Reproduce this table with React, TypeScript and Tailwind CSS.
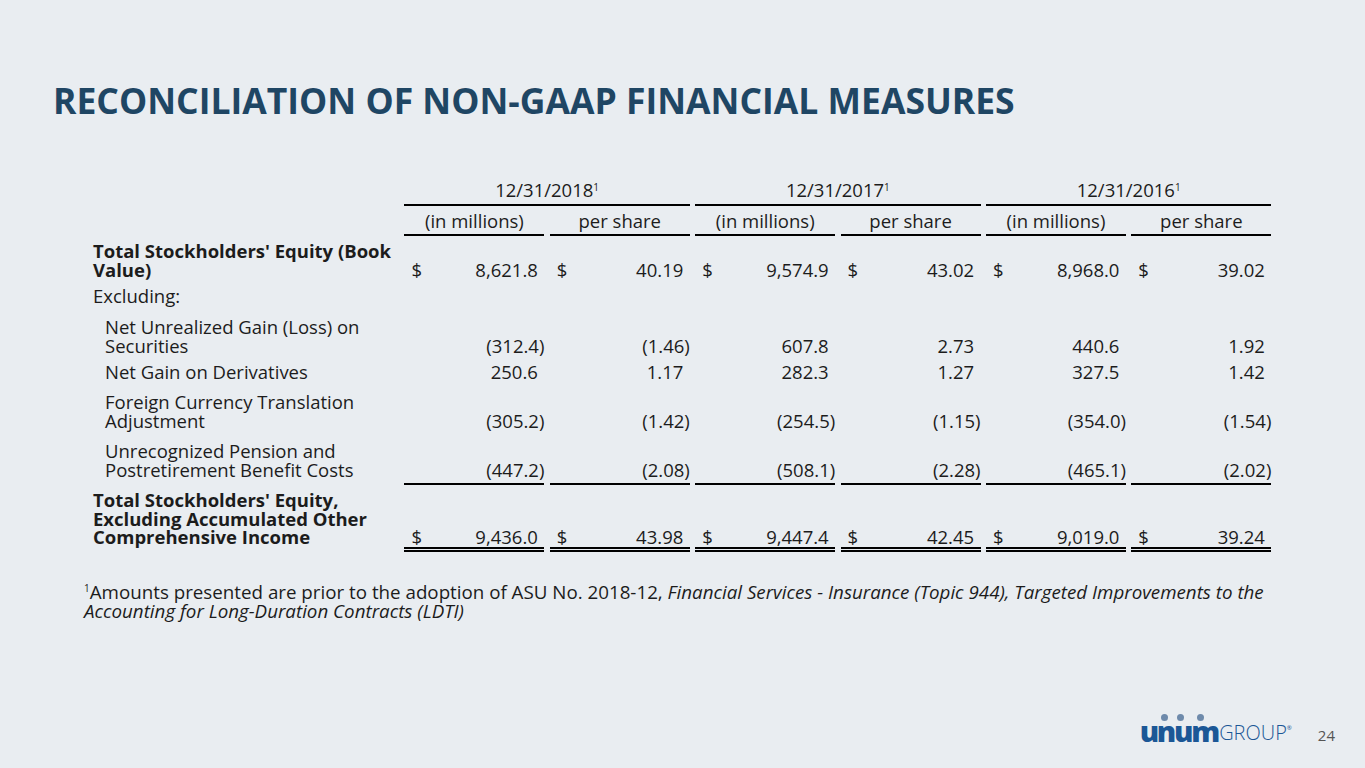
import React from 'react';

type Cell = { dollar?: boolean; value: string };

type Row = {
  label: string[];
  bold?: boolean;
  indent?: boolean;
  cells?: Cell[];
  gap: string;
  rule?: 'single' | 'double';
};

const years = ['12/31/2018', '12/31/2017', '12/31/2016'];

// values listed 2018 (mm, per share), 2017 (mm, per share), 2016 (mm, per share)
const rows: Row[] = [
  {
    label: ["Total Stockholders' Equity (Book", 'Value)'],
    bold: true,
    gap: 'mt-[6px]',
    cells: [
      { dollar: true, value: '8,621.8' },
      { dollar: true, value: '40.19' },
      { dollar: true, value: '9,574.9' },
      { dollar: true, value: '43.02' },
      { dollar: true, value: '8,968.0' },
      { dollar: true, value: '39.02' },
    ],
  },
  { label: ['Excluding:'], gap: 'mt-[8px]' },
  {
    label: ['Net Unrealized Gain (Loss) on', 'Securities'],
    indent: true,
    gap: 'mt-[12.5px]',
    cells: [
      { value: '(312.4)' },
      { value: '(1.46)' },
      { value: '607.8' },
      { value: '2.73' },
      { value: '440.6' },
      { value: '1.92' },
    ],
  },
  {
    label: ['Net Gain on Derivatives'],
    indent: true,
    gap: 'mt-[8px]',
    cells: [
      { value: '250.6' },
      { value: '1.17' },
      { value: '282.3' },
      { value: '1.27' },
      { value: '327.5' },
      { value: '1.42' },
    ],
  },
  {
    label: ['Foreign Currency Translation', 'Adjustment'],
    indent: true,
    gap: 'mt-[11.5px]',
    cells: [
      { value: '(305.2)' },
      { value: '(1.42)' },
      { value: '(254.5)' },
      { value: '(1.15)' },
      { value: '(354.0)' },
      { value: '(1.54)' },
    ],
  },
  {
    label: ['Unrecognized Pension and', 'Postretirement Benefit Costs'],
    indent: true,
    gap: 'mt-[12px]',
    rule: 'single',
    cells: [
      { value: '(447.2)' },
      { value: '(2.08)' },
      { value: '(508.1)' },
      { value: '(2.28)' },
      { value: '(465.1)' },
      { value: '(2.02)' },
    ],
  },
  {
    label: ["Total Stockholders' Equity,", 'Excluding Accumulated Other', 'Comprehensive Income'],
    bold: true,
    gap: 'mt-[6px]',
    rule: 'double',
    cells: [
      { dollar: true, value: '9,436.0' },
      { dollar: true, value: '43.98' },
      { dollar: true, value: '9,447.4' },
      { dollar: true, value: '42.45' },
      { dollar: true, value: '9,019.0' },
      { dollar: true, value: '39.24' },
    ],
  },
];

const gridCols = 'grid grid-cols-[306px_repeat(6,140px)] gap-x-[5.4px]';

function ValueCell({ cell, rule }: { cell?: Cell; rule?: Row['rule'] }) {
  const ruleClass =
    rule === 'single'
      ? 'pb-[4px] border-b-2 border-black'
      : rule === 'double'
        ? 'pb-[0.5px] border-b-[5px] border-double border-black'
        : '';
  if (!cell) return <div />;
  const paren = cell.value.startsWith('(');
  return (
    <div className={`flex justify-between ${ruleClass}`}>
      <span className="pl-[7px]">{cell.dollar ? '$' : ''}</span>
      <span className={paren ? '' : 'pr-[6.5px]'}>{cell.value}</span>
    </div>
  );
}

function UnumLogo() {
  return (
    <div className="flex items-end">
      <div className="relative">
        <span className="block text-[29px] leading-none font-extrabold tracking-[-2.2px] text-[#1b5796]">
          unum
        </span>
        <span className="absolute left-[21px] top-[-2px] w-[7px] h-[7px] rounded-full bg-[#6e8aab]" />
        <span className="absolute left-[37px] top-[-2px] w-[7px] h-[7px] rounded-full bg-[#6e8aab]" />
        <span className="absolute left-[57px] top-[-2px] w-[7px] h-[7px] rounded-full bg-[#6e8aab]" />
      </div>
      <span className="text-[20px] leading-none font-light text-[#1b5796] mb-[2px] ml-[1px]">GROUP</span>
      <span className="self-start text-[6px] text-[#1b5796] mt-[8px]">®</span>
    </div>
  );
}

export default function App() {
  return (
    <div className="w-[1365px] h-[768px] bg-[#e9edf1] flex flex-col font-['Open_Sans',sans-serif] text-[#1c1c1c] overflow-hidden">
      <h1 className="pl-[53px] pt-[83px] text-[35.5px] leading-none font-bold text-[#1f4664]">
        RECONCILIATION OF NON-GAAP FINANCIAL MEASURES
      </h1>

      <div className="pl-[93px] mt-[62px] text-[18.5px] leading-[18.5px]">
        {/* year headers */}
        <div className={gridCols}>
          <div />
          {years.map((y) => (
            <div key={y} className="col-span-2 text-center pb-[4.5px] border-b-2 border-black">
              {y}
              <span className="inline-block align-top text-[10px] leading-none mt-[1px]">1</span>
            </div>
          ))}
        </div>

        {/* sub headers */}
        <div className={`${gridCols} mt-[6px]`}>
          <div />
          {years.map((y) => (
            <React.Fragment key={y}>
              <div className="text-center pb-[4px] border-b-2 border-black">(in millions)</div>
              <div className="text-center pb-[4px] border-b-2 border-black">per share</div>
            </React.Fragment>
          ))}
        </div>

        {rows.map((row) => (
          <div key={row.label.join(' ')} className={`${gridCols} items-end ${row.gap}`}>
            <div
              className={`${row.bold ? 'font-bold' : ''} ${row.indent ? 'pl-[12px]' : ''} ${
                row.rule === 'single' ? 'pb-[6px]' : row.rule === 'double' ? 'pb-[5.5px]' : ''
              }`}
            >
              {row.label.map((line, i) => (
                <div key={i}>{line}</div>
              ))}
            </div>
            {row.cells ? row.cells.map((c, i) => <ValueCell key={i} cell={c} rule={row.rule} />) : null}
          </div>
        ))}
      </div>

      <p className="pl-[84px] mt-[30px] text-[18.75px] leading-[19px]">
        <span className="inline-block align-top text-[10px] leading-none mt-[1px]">1</span>
        Amounts presented are prior to the adoption of ASU No. 2018-12,{' '}
        <i>Financial Services - Insurance (Topic 944), Targeted Improvements to the</i>
        <br />
        <i>Accounting for Long-Duration Contracts (LDTI)</i>
      </p>

      <div className="mt-auto mb-[23px] flex items-end justify-end pr-[30px]">
        <UnumLogo />
        <span className="ml-[26px] text-[15px] leading-none text-[#555] mb-[2px]">24</span>
      </div>
    </div>
  );
}
